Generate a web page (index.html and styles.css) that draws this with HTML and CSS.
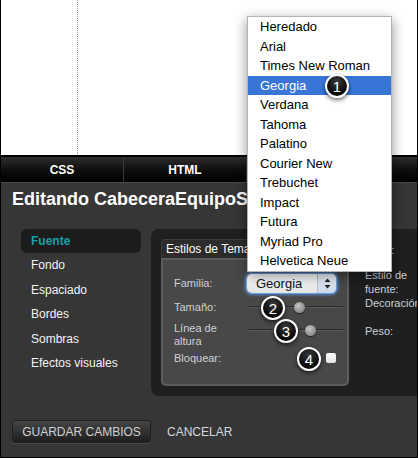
FILE: index.html
```html
<!DOCTYPE html>
<html lang="es">
<head>
<meta charset="utf-8">
<title>Editor</title>
<link rel="stylesheet" href="styles.css">
</head>
<body>
<div class="frame">
  <div class="canvas"><div class="guide"></div></div>
  <nav class="tabs">
    <div class="tab">CSS</div>
    <div class="tab">HTML</div>
    <div class="tab"></div>
    <div class="tab tab-last"></div>
  </nav>
  <div class="editor">
    <h1 class="title">Editando CabeceraEquipoSuperior</h1>
    <div class="main">
      <ul class="sidenav">
        <li class="active">Fuente</li>
        <li>Fondo</li>
        <li>Espaciado</li>
        <li>Bordes</li>
        <li>Sombras</li>
        <li>Efectos visuales</li>
      </ul>
      <div class="panel">
        <div class="group">
          <div class="group-head">Estilos de Tema</div>
          <div class="group-body">
            <div class="row row-1">
              <span class="label">Familia:</span>
              <div class="select">
                <span class="select-text">Georgia</span>
                <span class="select-arrows">
                  <svg width="7" height="11" viewBox="0 0 7 11"><path d="M3.5 0.5 L6.5 4 L0.5 4 Z" fill="#222"/><path d="M3.5 10.5 L6.5 7 L0.5 7 Z" fill="#222"/></svg>
                </span>
              </div>
            </div>
            <div class="row row-2">
              <span class="label">Tamaño:</span>
              <div class="slider"><span class="thumb" style="margin-left:45px"></span></div>
            </div>
            <div class="row row-3">
              <span class="label">Línea de<br>altura</span>
              <div class="slider"><span class="thumb" style="margin-left:56px"></span></div>
            </div>
            <div class="row row-4">
              <span class="label">Bloquear:</span>
              <span class="checkbox"></span>
            </div>
          </div>
        </div>
        <div class="props">
          <div class="prop p-color">Color:</div>
          <div class="prop p-estilo">Estilo de<br>fuente:</div>
          <div class="prop">Decoración:</div>
          <div class="prop p-peso">Peso:</div>
        </div>
      </div>
    </div>
    <div class="actions">
      <button class="save">GUARDAR CAMBIOS</button>
      <button class="cancel">CANCELAR</button>
    </div>
  </div>

  <ul class="dropdown">
    <li>Heredado</li>
    <li>Arial</li>
    <li>Times New Roman</li>
    <li class="sel">Georgia</li>
    <li>Verdana</li>
    <li>Tahoma</li>
    <li>Palatino</li>
    <li>Courier New</li>
    <li>Trebuchet</li>
    <li>Impact</li>
    <li>Futura</li>
    <li>Myriad Pro</li>
    <li>Helvetica Neue</li>
  </ul>

  <span class="badge b1">1</span>
  <span class="badge b2">2</span>
  <span class="badge b3">3</span>
  <span class="badge b4">4</span>
</div>
</body>
</html>
```
FILE: styles.css
```css
* { box-sizing: border-box; }
body {
  margin: 0;
  font-family: "Liberation Sans", Arial, sans-serif;
  background: #fff;
}
.frame {
  position: relative;
  width: 418px;
  height: 458px;
  border-left: 1px solid #000;
  border-right: 1px solid #000;
  border-bottom: 1px solid #000;
  display: flex;
  flex-direction: column;
  overflow: hidden;
}
.canvas {
  flex: none;
  height: 155px;
  background: #fff;
}
.guide {
  margin-left: 76px;
  width: 0;
  height: 100%;
  border-left: 1px dotted #9a9a9a;
}
.tabs {
  flex: none;
  height: 28px;
  border-top: 2px solid #000;
  border-bottom: 1px solid #4a4a4a;
  background: linear-gradient(#2e2e2e, #0c0c0c 55%, #000);
  display: grid;
  grid-template-columns: 123px 123px 123px 1fr;
}
.tab {
  color: #fff;
  font-weight: bold;
  font-size: 12px;
  display: flex;
  align-items: center;
  justify-content: center;
  border-right: 1px solid #3a3a3a;
}
.tab-last { border-right: none; }

.editor {
  flex: 1;
  background: #363636;
  padding: 6px 0 0 11px;
  display: flex;
  flex-direction: column;
}
.title {
  margin: 0;
  font-size: 18px;
  line-height: 20px;
  font-weight: bold;
  color: #fff;
  white-space: nowrap;
}
.main {
  display: flex;
  margin-top: 20px;
  height: 167px;
}
.sidenav {
  list-style: none;
  margin: 0 0 0 9px;
  padding: 0;
  width: 120px;
  flex: none;
}
.sidenav li {
  height: 24.4px;
  line-height: 24.4px;
  padding-left: 10px;
  font-size: 12px;
  color: #f4f4f4;
}
.sidenav li.active {
  background: #1c1c1c;
  border-radius: 6px;
  color: #1a9fa8;
  font-weight: bold;
}
.panel {
  flex: 1;
  margin-left: 10px;
  background: #1f1f1f;
  border-radius: 8px 0 0 8px;
  padding: 10px 0 0 10px;
  display: flex;
  overflow: hidden;
}
.group {
  width: 188px;
  flex: none;
}
.group-head {
  height: 19px;
  line-height: 18px;
  background: #2c2c2c;
  border: 1px solid #3c3c3c;
  border-bottom: none;
  border-radius: 4px 4px 0 0;
  color: #fff;
  font-size: 12px;
  padding-left: 4px;
  white-space: nowrap;
}
.group-body {
  height: 128px;
  background: #484848;
  border: 2px solid #5d5d5d;
  border-radius: 0 0 5px 5px;
  padding: 13px 0 0 11px;
}
.row {
  display: flex;
  align-items: center;
}
.row-1 { height: 20px; }
.row-2 { height: 18px; margin-top: 5px; }
.row-3 { height: 26px; margin-top: 6px; align-items: flex-start; }
.row-4 { height: 14px; margin-top: 3px; }
.label {
  width: 75px;
  flex: none;
  font-size: 11px;
  line-height: 13px;
  color: #cdd0d5;
}
.select {
  margin-left: -2px;
  width: 89px;
  height: 19px;
  border-radius: 5px;
  background: linear-gradient(#ffffff, #e4e4e4);
  box-shadow: 0 0 0 1px #6b9bd9, 0 0 3px 2px rgba(86, 146, 224, 0.85);
  display: flex;
}
.select-text {
  flex: 1;
  font-size: 13px;
  line-height: 19px;
  padding-left: 9px;
  color: #111;
}
.select-arrows {
  width: 19px;
  border-left: 1px solid #b7c3d3;
  border-radius: 0 5px 5px 0;
  background: linear-gradient(#f2f6fb, #cbd8ea);
  display: flex;
  align-items: center;
  justify-content: center;
}
.slider {
  width: 94px;
  height: 16px;
  display: flex;
  align-items: center;
  background: linear-gradient(to bottom, transparent 7px, #2b2b2b 7px, #2b2b2b 8px, #5a5a5a 8px, #5a5a5a 9px, transparent 9px);
}
.thumb {
  width: 11px;
  height: 11px;
  border-radius: 50%;
  background: radial-gradient(circle at 40% 35%, #c4c4c4, #8a8a8a 70%, #6e6e6e);
  box-shadow: 0 1px 1px rgba(0, 0, 0, 0.5);
}
.checkbox {
  margin-left: 77px;
  width: 10px;
  height: 10px;
  border-radius: 2px;
  background: linear-gradient(#ffffff, #e2e2e2);
}
.props {
  margin-left: 16px;
  font-size: 11px;
  line-height: 14px;
  color: #cdd0d5;
  white-space: nowrap;
}
.p-color { margin-top: 4px; }
.p-estilo { margin-top: 11px; }
.p-peso { margin-top: 14px; }

.actions {
  display: flex;
  align-items: center;
  margin-top: 24px;
}
.save {
  width: 139px;
  height: 23px;
  padding: 0;
  border: 1px solid #202020;
  border-radius: 3px;
  background: linear-gradient(#454545, #1e1e1e);
  box-shadow: 0 1px 0 #4a4a4a;
  color: #d0d0d0;
  font-family: "Liberation Sans", Arial, sans-serif;
  font-size: 12px;
}
.cancel {
  margin-left: 16px;
  padding: 0;
  border: none;
  background: none;
  color: #d6d6d6;
  font-family: "Liberation Sans", Arial, sans-serif;
  font-size: 12px;
}

.dropdown {
  position: absolute;
  left: 246px;
  top: 16px;
  width: 145px;
  margin: 0;
  padding: 0;
  list-style: none;
  background: #fff;
  border: 1px solid #b3b3b3;
  box-shadow: 0 4px 12px rgba(0, 0, 0, 0.45);
  font-size: 13px;
  color: #000;
}
.dropdown li {
  height: 19.5px;
  line-height: 19.5px;
  padding-left: 12px;
  white-space: nowrap;
}
.dropdown li.sel {
  background: #3875d7;
  color: #fff;
}

.badge {
  position: absolute;
  width: 24px;
  height: 24px;
  border: 2px solid #fff;
  border-radius: 50%;
  background: radial-gradient(circle at 50% 30%, #3a3a3a, #0a0a0a 65%);
  color: #fff;
  font-size: 15px;
  display: flex;
  align-items: center;
  justify-content: center;
  box-shadow: 0 2px 4px rgba(0, 0, 0, 0.6);
}
.b1 { left: 324px; top: 74px; }
.b2 { left: 260px; top: 296px; }
.b3 { left: 273px; top: 319px; }
.b4 { left: 296px; top: 347px; }
```
